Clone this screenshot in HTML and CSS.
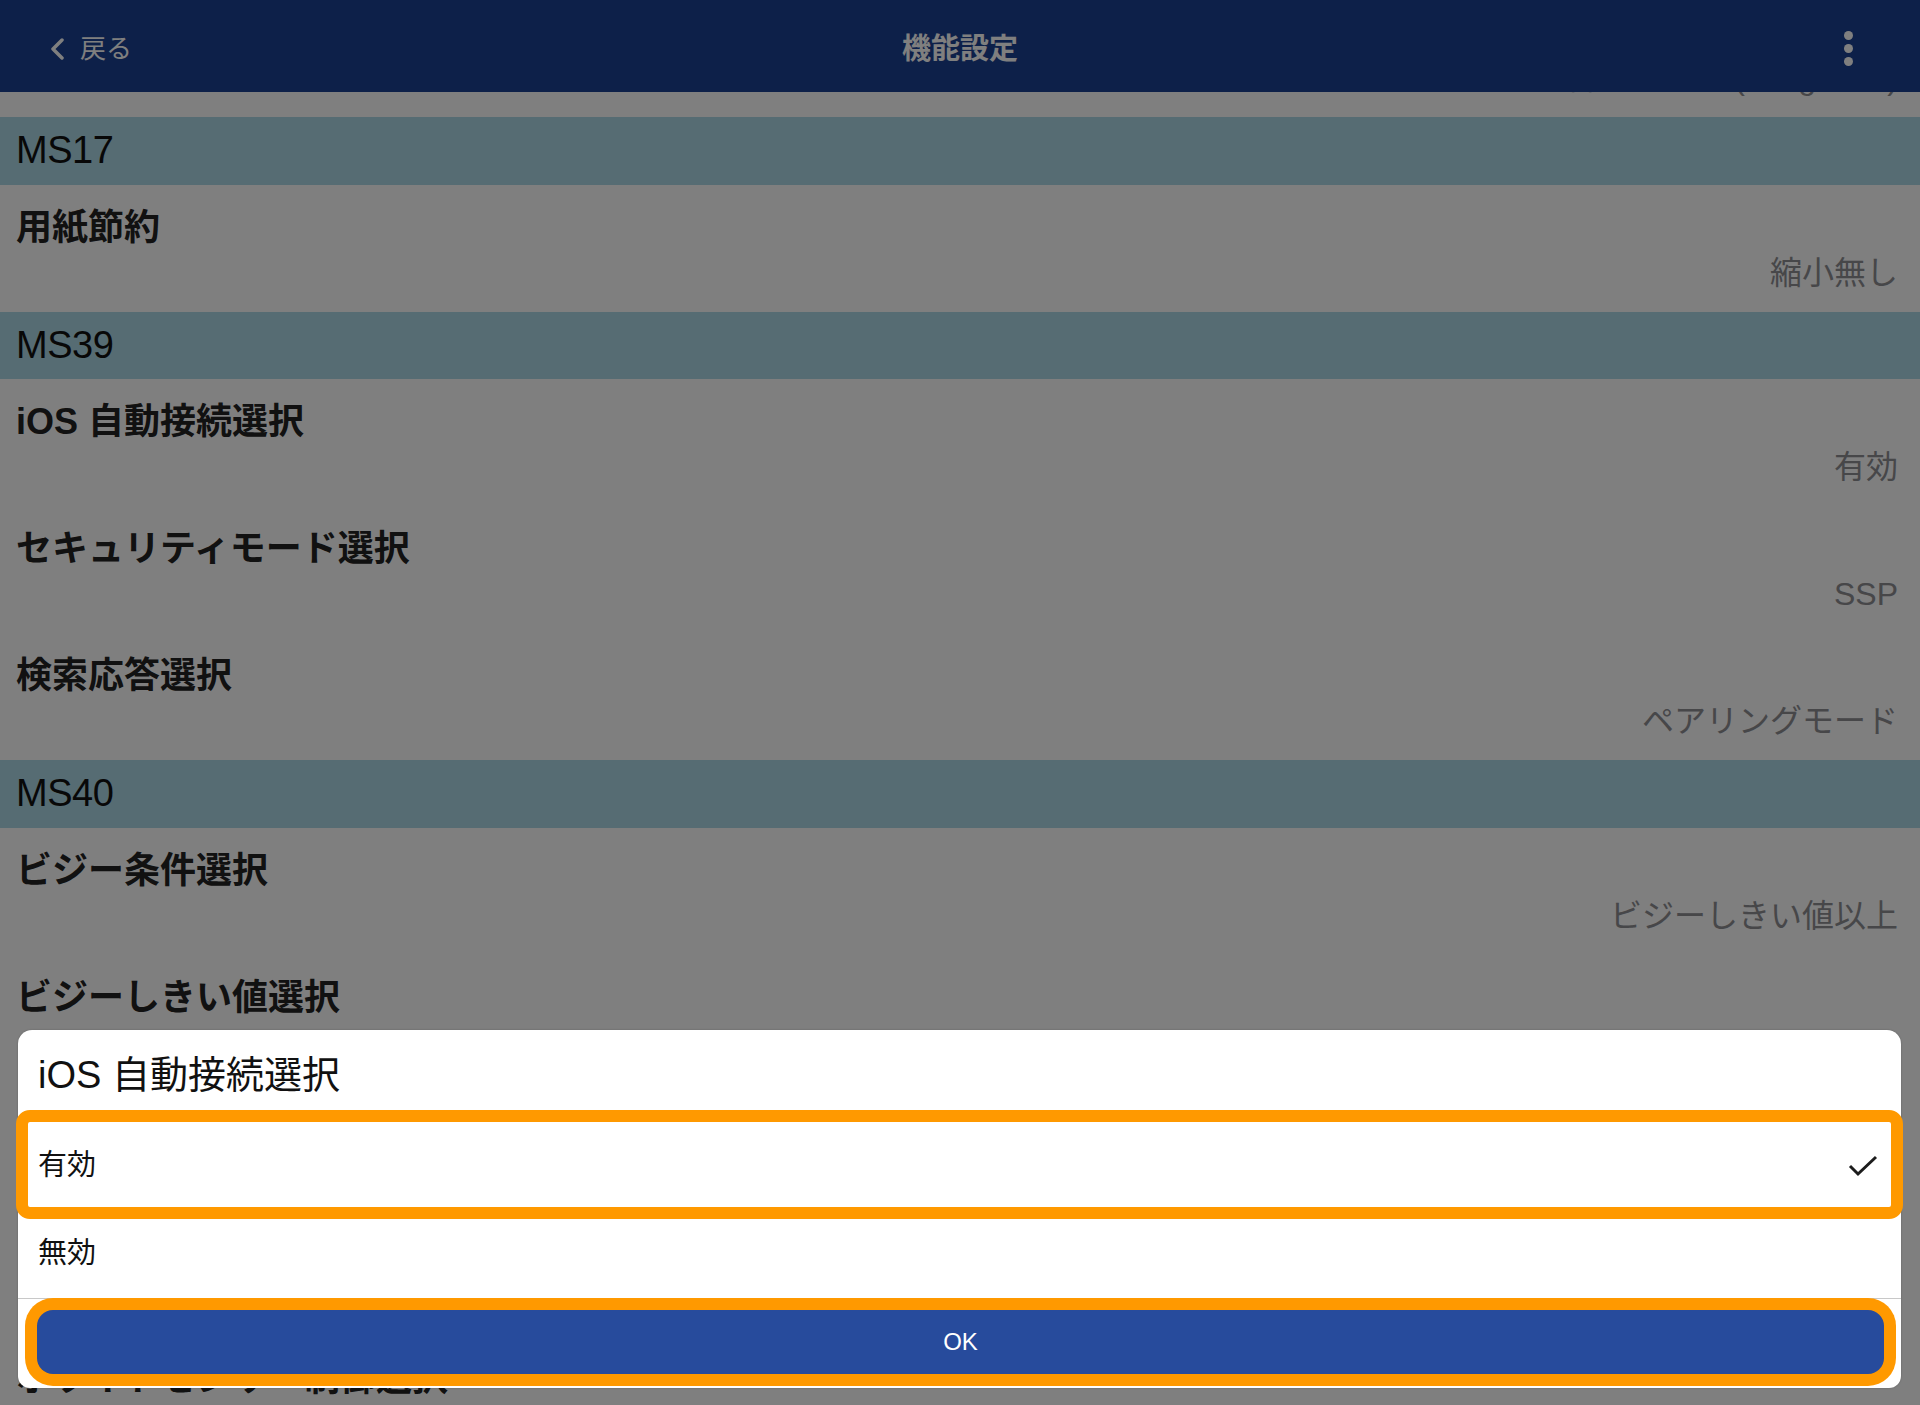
FILE: index.html
```html
<!DOCTYPE html>
<html lang="ja">
<head>
  <meta charset="UTF-8" />
  <meta name="viewport" content="width=device-width, initial-scale=1.0"/>
  <title>機能設定</title>
  <link rel="stylesheet" href="styles.css">
</head>
<body>
  <div class="screen">
    <header class="nav">
      <a class="nav-back">
        <svg class="nav-chevron" width="14" height="22" viewBox="0 0 14 22">
          <polyline points="12,2 3,11 12,20" />
        </svg>
        <span>戻る</span>
      </a>
      <h1 class="nav-title">機能設定</h1>
      <div class="nav-more"><span></span><span></span><span></span></div>
    </header>

    <main class="settings">
      <!-- row scrolled under the bar: only its value peeks out -->
      <div class="setting setting-clipped">
        <div class="setting-value">ブザー音量モード (Long tone)</div>
      </div>

      <div class="group">MS17</div>
      <div class="setting">
        <div class="setting-name">用紙節約</div>
        <div class="setting-value">縮小無し</div>
      </div>

      <div class="group">MS39</div>
      <div class="setting">
        <div class="setting-name">iOS 自動接続選択</div>
        <div class="setting-value">有効</div>
      </div>
      <div class="setting">
        <div class="setting-name">セキュリティモード選択</div>
        <div class="setting-value">SSP</div>
      </div>
      <div class="setting">
        <div class="setting-name">検索応答選択</div>
        <div class="setting-value">ペアリングモード</div>
      </div>

      <div class="group">MS40</div>
      <div class="setting">
        <div class="setting-name">ビジー条件選択</div>
        <div class="setting-value">ビジーしきい値以上</div>
      </div>
      <div class="setting">
        <div class="setting-name">ビジーしきい値選択</div>
      </div>
      <div class="setting setting-hidden"></div>
      <div class="setting setting-hidden"></div>
      <div class="setting">
        <div class="setting-name">ホワイトセンサー制御選択</div>
      </div>
    </main>

    <div class="dim"></div>

    <div class="sheet">
      <div class="sheet-title">iOS 自動接続選択</div>
      <div class="option is-picked">
        <span>有効</span>
        <svg class="option-check" width="30" height="22" viewBox="0 0 30 22">
          <polyline points="2,11 10,19 28,2" />
        </svg>
      </div>
      <div class="option">
        <span>無効</span>
      </div>
      <div class="sheet-footer">
        <button class="sheet-ok">OK</button>
      </div>
    </div>
  </div>
</body>
</html>
```

FILE: styles.css
```css
:root {
  --navy: #1a4092;
  --band: #add8e6;
  --text-dark: #222;
  --text-muted: #8e8e93;
  --accent: #ff9900;
  --button: #274b9c;
}

* {
  box-sizing: border-box;
  margin: 0;
  padding: 0;
}

body {
  font-family: "Liberation Sans", "Noto Sans CJK JP", sans-serif;
  color: var(--text-dark);
  background: #fff;
}

.screen {
  position: relative;
  width: 1920px;
  height: 1405px;
  overflow: hidden;
  display: flex;
  flex-direction: column;
}

/* top bar */
.nav {
  height: 92px;
  flex: none;
  background: var(--navy);
  display: grid;
  grid-template-columns: 1fr auto 1fr;
  align-items: center;
  padding-top: 5px;
  color: #fff;
}

.nav-back {
  display: flex;
  align-items: center;
  gap: 16px;
  padding-left: 50px;
  font-size: 26px;
  line-height: 30px;
}

.nav-chevron polyline {
  fill: none;
  stroke: #fff;
  stroke-width: 3.5;
  stroke-linecap: round;
  stroke-linejoin: round;
}

.nav-title {
  font-size: 29px;
  font-weight: 700;
  line-height: 34px;
}

.nav-more {
  justify-self: end;
  display: flex;
  flex-direction: column;
  gap: 4px;
  padding-right: 67px;
}

.nav-more span {
  width: 9px;
  height: 9px;
  border-radius: 50%;
  background: #fff;
}

/* list */
.settings {
  flex: 1;
  overflow: hidden;
}

.group {
  height: 67.5px;
  line-height: 67.5px;
  padding-left: 16px;
  background: var(--band);
  font-size: 38px;
  letter-spacing: -0.5px;
  color: #111;
}

.setting {
  height: 127px;
  padding: 21px 22px 0 16px;
}

.setting-clipped {
  margin-top: -102px;
  padding-top: 68px;
}

.setting-name {
  font-size: 36px;
  font-weight: 700;
  line-height: 44px;
}

.setting-value {
  margin-top: 3px;
  font-size: 32px;
  line-height: 40px;
  text-align: right;
  color: var(--text-muted);
}

.setting-clipped .setting-value {
  margin-top: 0;
}

/* modal */
.dim {
  position: absolute;
  inset: 0;
  background: rgba(0, 0, 0, 0.5);
}

.sheet {
  position: absolute;
  left: 18px;
  right: 19px;
  bottom: 17px;
  background: #fff;
  border-radius: 14px 14px 12px 12px;
  box-shadow: 0 0 2px rgba(0, 0, 0, 0.25);
}

.sheet-title {
  height: 92px;
  display: flex;
  align-items: center;
  padding: 0 0 10px 20px;
  font-size: 38px;
  color: #111;
}

.option {
  position: relative;
  height: 88px;
  display: flex;
  align-items: center;
  justify-content: space-between;
  padding: 0 23px 8px 20px;
  font-size: 29px;
  color: #111;
}

.option-check {
  margin-top: 8px;
}

.option.is-picked::after {
  content: "";
  position: absolute;
  top: -12px;
  left: -2px;
  right: -2px;
  bottom: -9px;
  border: 12px solid var(--accent);
  border-radius: 14px;
}

.option-check polyline {
  fill: none;
  stroke: #1c1c1c;
  stroke-width: 3;
}

.sheet-footer {
  border-top: 1px solid #c8c8c8;
  padding: 11px 17px 14px 19px;
}

.sheet-ok {
  display: block;
  width: 100%;
  height: 64px;
  border: none;
  border-radius: 16px;
  background: var(--button);
  box-shadow: 0 0 0 12px var(--accent);
  color: #fff;
  font-family: inherit;
  font-size: 24px;
}
```
